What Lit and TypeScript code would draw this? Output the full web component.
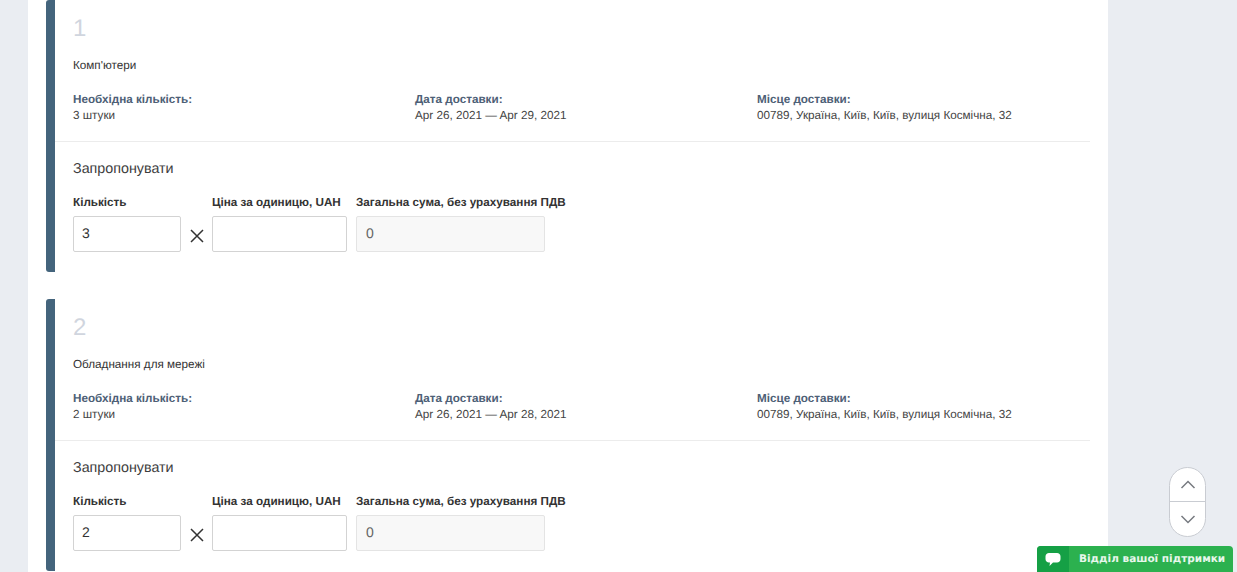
import { LitElement, html, css } from "lit";
import { customElement } from "lit/decorators.js";

const items = [
  { n: "1", name: "Комп'ютери", qty: "3 штуки", date: "Apr 26, 2021 — Apr 29, 2021", place: "00789, Україна, Київ, Київ, вулиця Космічна, 32", v: "3" },
  { n: "2", name: "Обладнання для мережі", qty: "2 штуки", date: "Apr 26, 2021 — Apr 28, 2021", place: "00789, Україна, Київ, Київ, вулиця Космічна, 32", v: "2" },
];

@customElement("app-root")
export class AppRoot extends LitElement {
  static styles = css`
    :host { display: block; height: 572px; overflow: hidden; position: relative; background: #eaedf2; font-family: "Liberation Sans", Arial, sans-serif; color: #333; text-rendering: geometricPrecision; }
    .panel { margin-left: 28px; width: 1080px; height: 572px; background: #fff; padding: 0 18px; box-sizing: border-box; overflow: hidden; display: flex; flex-direction: column; gap: 27px; }
    .card { flex: none; width: 1044px; height: 272px; box-sizing: border-box; border-left: 9px solid #44647c; border-radius: 3px; }
    .head { height: 142px; box-sizing: border-box; padding: 14px 18px 0; border-bottom: 1px solid #ececec; }
    .num { font-size: 24px; line-height: 30px; color: #d0d5de; }
    .name { font-size: 11.7px; line-height: 16px; margin-top: 14px; color: #333; }
    .info { display: grid; grid-template-columns: repeat(3, 342px); margin-top: 18px; font-size: 11.7px; line-height: 16px; color: #444; }
    .info b { display: block; color: #4d6076; font-weight: 700; }
    .offer { padding: 18px 18px 0; }
    .title { font-size: 14.3px; line-height: 18px; color: #3d3d3d; }
    .row { display: flex; align-items: flex-end; margin-top: 17px; }
    .f label { display: block; font-size: 11.7px; line-height: 16px; font-weight: 700; color: #333; margin-bottom: 5px; }
    .box { box-sizing: border-box; height: 36px; border: 1px solid #d3d3d3; border-radius: 2px; background: #fff; font-size: 14px; line-height: 32px; padding-left: 8px; color: #333; }
    .qty { width: 108px; }
    .price { width: 135px; }
    .sum { width: 189px; background: #f8f8f8; border-color: #e4e4e4; color: #666; padding-left: 9px; }
    .times { width: 31px; height: 36px; display: flex; align-items: center; justify-content: center; }
    .times svg { margin-top: 3px; }
    .f.last { margin-left: 9px; }
    .f.last label { white-space: nowrap; }
    .f.price-f label { white-space: nowrap; }
    .scroll { position: absolute; left: 1169px; top: 467px; width: 37px; height: 70px; box-sizing: border-box; border: 1px solid #c9ccd2; border-radius: 19px; background: #fff; display: flex; flex-direction: column; }
    .scroll div { height: 33px; display: flex; align-items: center; justify-content: center; }
    .scroll div + div { height: 35px; border-top: 1px solid #c9ccd2; box-sizing: border-box; }
    .chat { position: absolute; left: 1037px; top: 546px; width: 196px; height: 26px; background: #2cb14f; border-radius: 4px 4px 0 0; overflow: hidden; display: flex; align-items: center; }
    .chat .ic { width: 32px; height: 26px; background: #15a045; display: flex; align-items: center; justify-content: center; }
    .chat span { margin-left: 10px; font-family: "DejaVu Sans", sans-serif; font-size: 10.5px; font-weight: 700; color: #e8f7ec; white-space: nowrap; }
  `;

  render() {
    return html`
      <div class="panel">
        ${items.map((i) => html`
          <section class="card">
            <div class="head">
              <div class="num">${i.n}</div>
              <div class="name">${i.name}</div>
              <div class="info">
                <div><b>Необхідна кількість:</b>${i.qty}</div>
                <div><b>Дата доставки:</b>${i.date}</div>
                <div><b>Місце доставки:</b>${i.place}</div>
              </div>
            </div>
            <div class="offer">
              <div class="title">Запропонувати</div>
              <div class="row">
                <div class="f"><label>Кількість</label><div class="box qty">${i.v}</div></div>
                <div class="times"><svg width="14" height="14" viewBox="0 0 14 14" fill="none" stroke="#333" stroke-width="1.5"><path d="M1 1l12 12M13 1L1 13"/></svg></div>
                <div class="f price-f"><label>Ціна за одиницю, UAH</label><div class="box price"></div></div>
                <div class="f last"><label>Загальна сума, без урахування ПДВ</label><div class="box sum">0</div></div>
              </div>
            </div>
          </section>
        `)}
      </div>
      <div class="scroll">
        <div><svg width="16" height="9" viewBox="0 0 16 9" fill="none" stroke="#777a80" stroke-width="1.5"><path d="M1.500 8L8 1.500 14.500 8"/></svg></div>
        <div><svg width="16" height="9" viewBox="0 0 16 9" fill="none" stroke="#777a80" stroke-width="1.5"><path d="M1.500 1L8 7.500 14.500 1"/></svg></div>
      </div>
      <div class="chat">
        <div class="ic"><svg width="16" height="15" viewBox="0 0 16 15" fill="#fff"><path d="M4 1h8c2 0 3.500 1.200 3.500 3.500v2.500c0 2.300-1.500 3.500-3.500 3.500H8l-3.500 3.500.5-3.500H4C2 10.500.5 9.300.5 7V4.500C.5 2.200 2 1 4 1z"/></svg></div>
        <span>Відділ вашої підтримки</span>
      </div>
    `;
  }
}
